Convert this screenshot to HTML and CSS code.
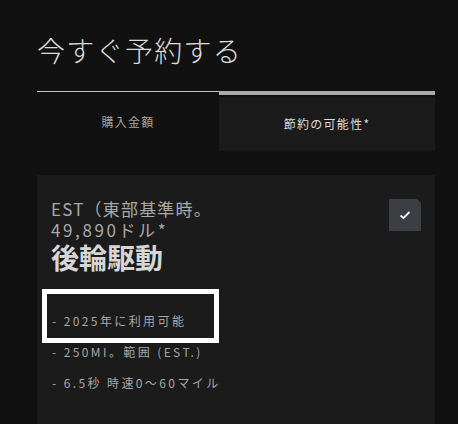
FILE: index.html
```html
<!DOCTYPE html>
<html lang="ja">
<head>
  <meta charset="UTF-8">
  <title>今すぐ予約する</title>
  <link rel="stylesheet" href="styles.css">
</head>
<body>
  <div class="page">
    <h1 class="title">今すぐ予約する</h1>

    <div class="tabs">
      <div class="tab">購入金額</div>
      <div class="tab active">節約の可能性*</div>
    </div>

    <div class="card">
      <div class="card-head">
        <div class="card-info">
          <div class="trim">EST（東部基準時。</div>
          <div class="price">49,890ドル*</div>
          <div class="model">後輪駆動</div>
        </div>
        <div class="check">
          <svg width="12" height="10" viewBox="0 0 12 10">
            <path d="M1.5 5.5 L4.5 8 L10.5 2" fill="none" stroke="#f2f2f2" stroke-width="1.8"/>
          </svg>
        </div>
      </div>

      <ul class="specs">
        <li>- 2025年に利用可能</li>
        <li>- 250MI。範囲 (EST.)</li>
        <li>- 6.5秒 時速0〜60マイル</li>
      </ul>

      <div class="highlight"></div>
    </div>
  </div>
</body>
</html>
```

FILE: styles.css
```css
body {
  margin: 0;
  background-color: #111111;
  font-family: "Noto Sans CJK JP", "Noto Sans", sans-serif;
  color: #d9d9d9;
}

.page {
  padding: 0 23px 0 37px;
}

.title {
  margin: 0;
  padding-top: 26px;
  font-size: 28px;
  font-weight: 300;
  letter-spacing: 1.3px;
  line-height: 48px;
  color: #dcdcdc;
}

.tabs {
  display: grid;
  grid-template-columns: 182px 1fr;
  margin-top: 17px;
}

.tab {
  height: 59px;
  border-top: 1px solid #c6c6c6;
  display: flex;
  align-items: center;
  justify-content: center;
  font-size: 12px;
  letter-spacing: 1.3px;
  color: #a3a3a3;
}

.tab.active {
  height: 56px;
  border-top: 4px solid #ababab;
  background-color: #1b1b1b;
  box-shadow: inset 0 2px 0 #111111;
  color: #dedede;
}

.card {
  position: relative;
  margin-top: 24px;
  background-color: #1b1b1b;
  padding: 23px 14px 40px 14px;
}

.card-head {
  display: flex;
  justify-content: space-between;
}

.trim, .price {
  font-size: 17px;
  line-height: 21px;
  letter-spacing: 1.2px;
  color: #a9a9a9;
}

.price {
  letter-spacing: 2.6px;
}

.model {
  font-size: 28px;
  font-weight: 700;
  line-height: 35px;
  color: #d6d6d6;
}

.check {
  width: 32px;
  height: 32px;
  margin-top: 1px;
  background-color: #3b3e43;
  clip-path: polygon(0 0, 28px 0, 32px 4px, 32px 32px, 0 32px);
  display: flex;
  align-items: center;
  justify-content: center;
}

.specs {
  list-style: none;
  margin: 0;
  padding: 30px 0 0 1px;
}

.specs li {
  font-size: 12px;
  line-height: 31px;
  letter-spacing: 2.4px;
  color: #a6a6a6;
}

.highlight {
  position: absolute;
  left: 5px;
  top: 114px;
  width: 167px;
  height: 44px;
  border: 5px solid #ffffff;
}
```
